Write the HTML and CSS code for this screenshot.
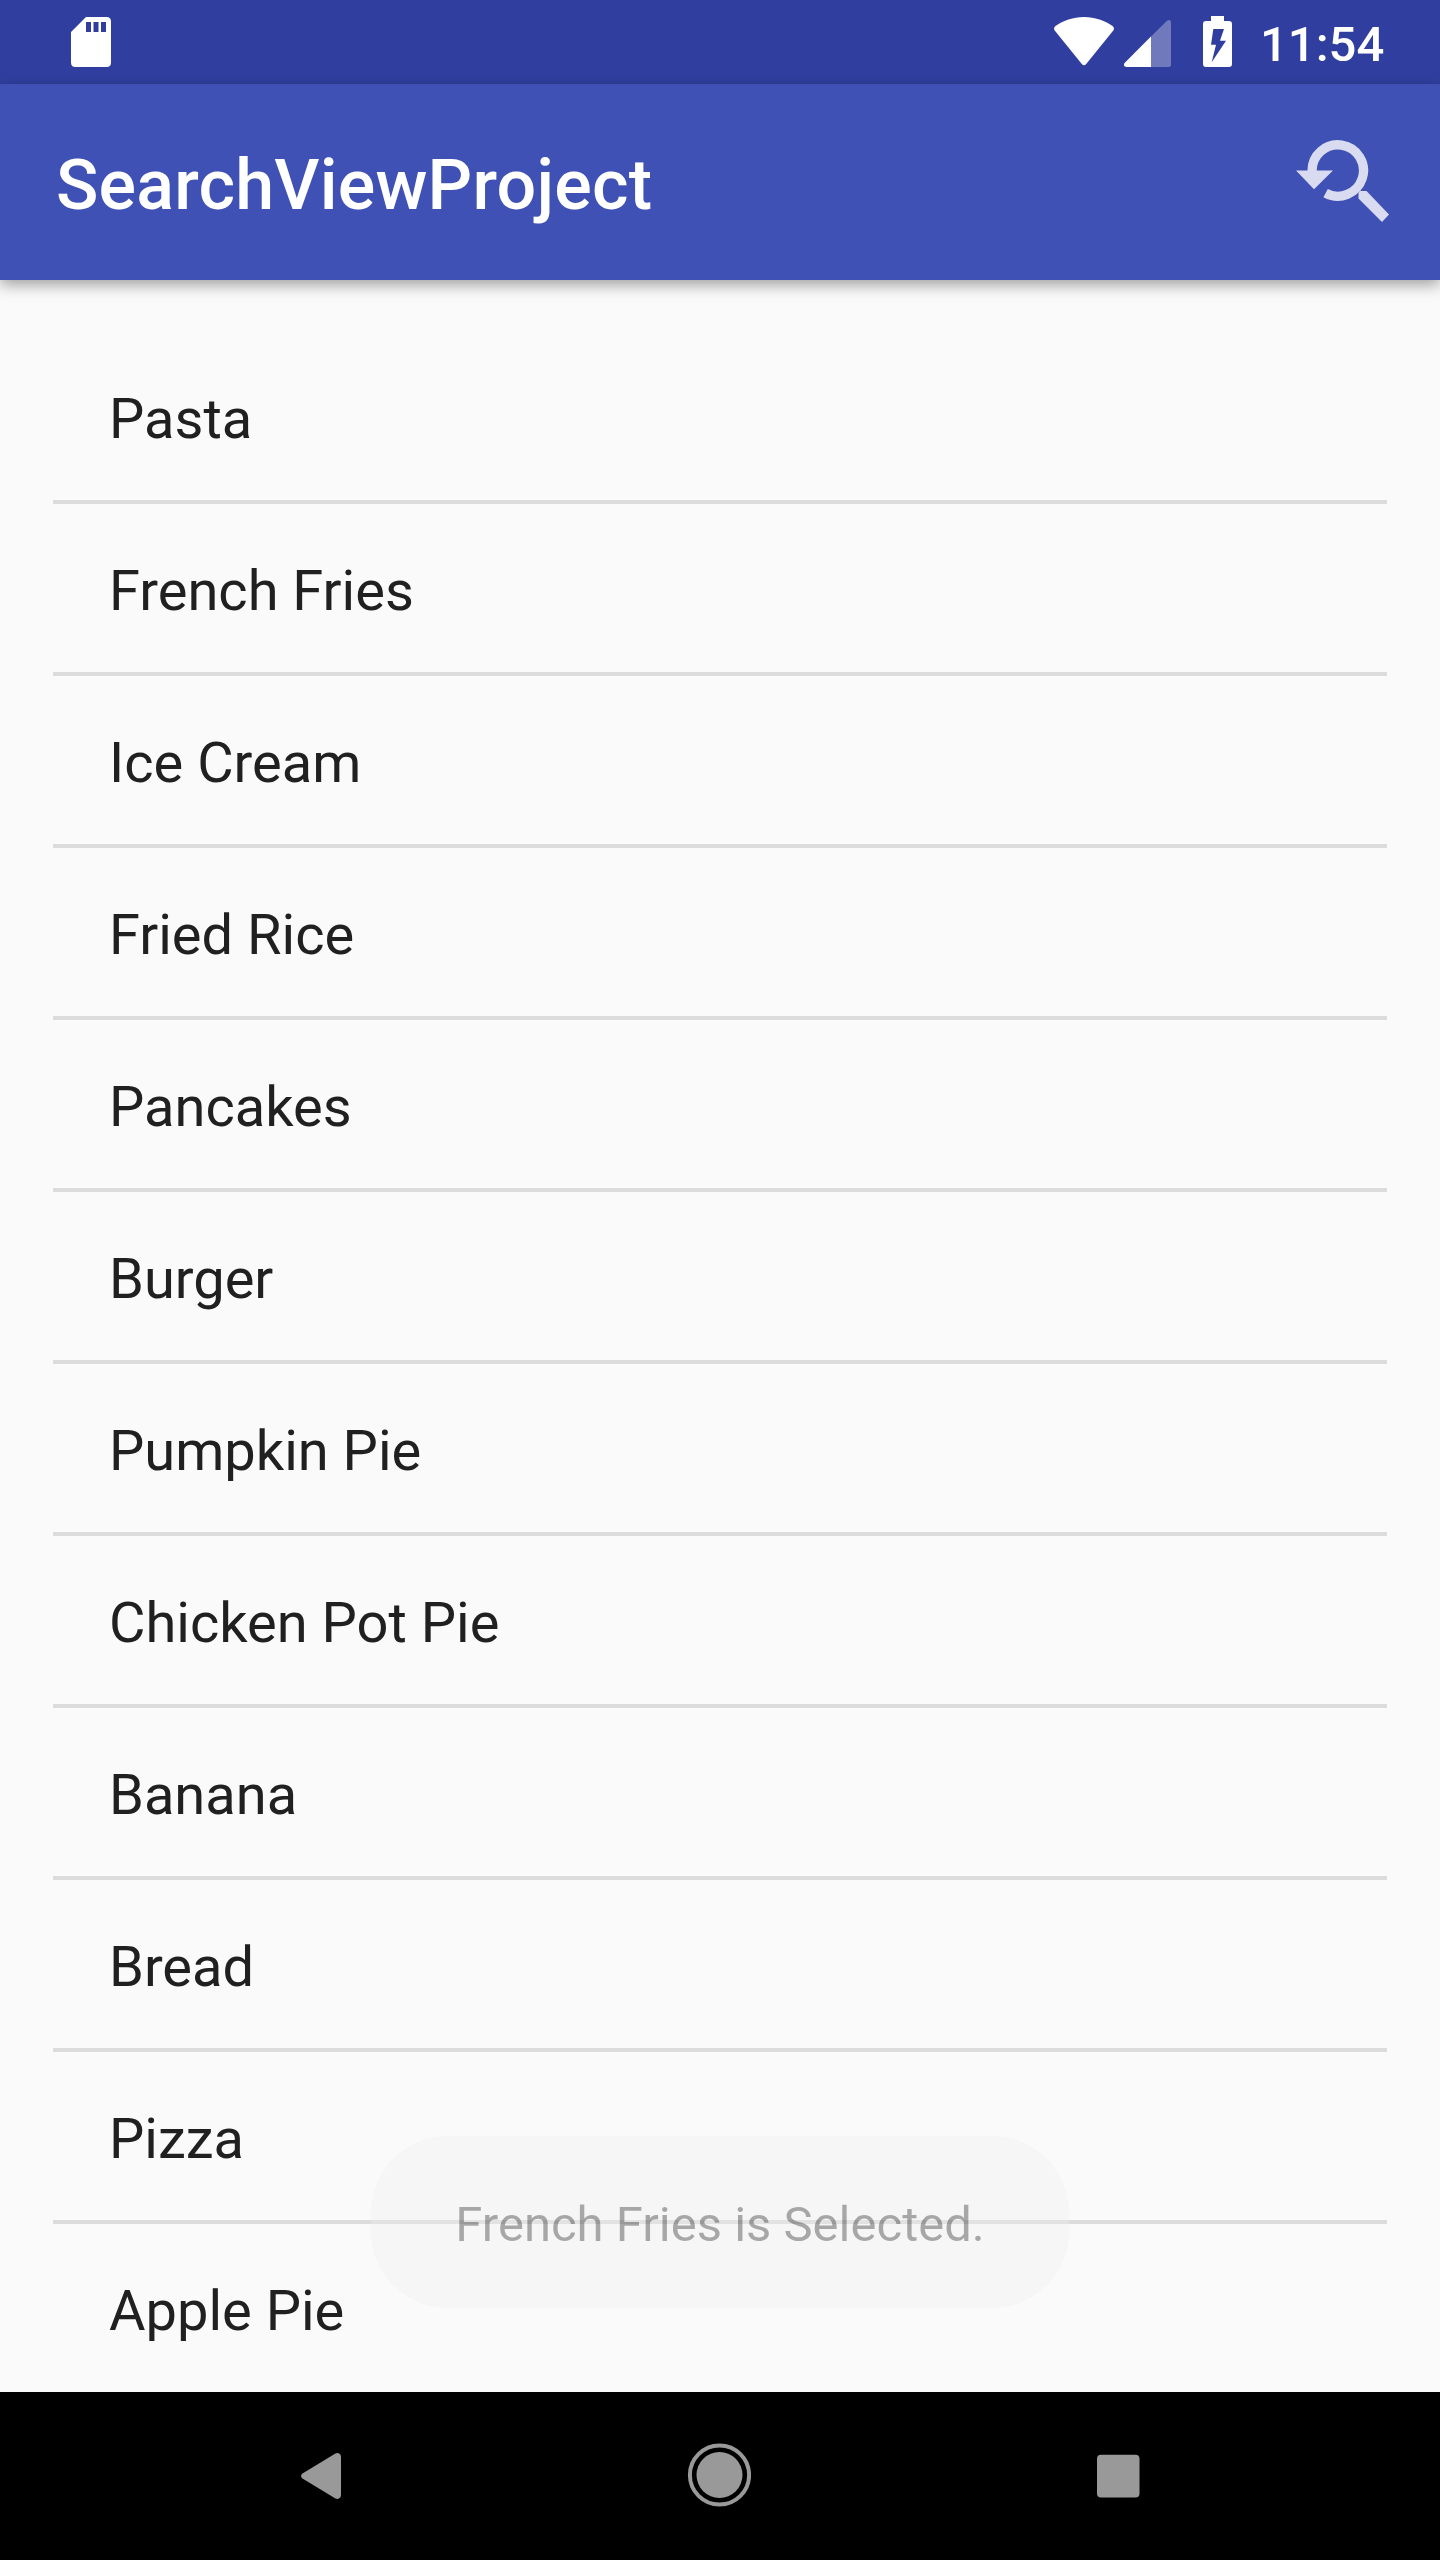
FILE: index.html
```html
<!DOCTYPE html>
<html lang="en">
<head>
<meta charset="utf-8">
<title>SearchViewProject</title>
<link rel="stylesheet" href="styles.css">
</head>
<body>
<div class="screen">
  <header class="status-bar">
    <svg class="sd-icon" viewBox="0 0 40 50"><path fill="#fff" fill-rule="evenodd" d="M15 0H35.500Q40 0 40 4.500V45.500Q40 50 35.500 50H4.500Q0 50 0 45.500V15ZM15 5V15H20V5ZM22.500 5V15H27.500V5ZM30 5V15H35V5Z"/></svg>
    <div class="status-icons">
      <svg class="wifi-icon" viewBox="0 0 60 49"><path fill="#fff" d="M30 0C41 0 50.500 3.500 58.500 9Q61 11 59.300 13.500L32 47.200Q30 49.200 28 47.200L.7 13.500Q-1 11 1.500 9C9.500 3.500 19 0 30 0Z"/></svg>
      <svg class="signal-icon" viewBox="0 0 47 47"><path fill="#7079bb" d="M27 16.500 43 .8Q44.500-.4 46 .3Q47 1 47 2.500V44.500Q47 47 44.500 47H27Z"/><path fill="#fff" d="M27 16.500V47H2.500Q.5 47 0 45.300Q-.2 44 .8 42.800Z"/></svg>
      <svg class="battery-icon" viewBox="0 0 29 51"><path fill="#fff" fill-rule="evenodd" d="M8 0H21V5H26Q29 5 29 8V48Q29 51 26 51H3Q0 51 0 48V8Q0 5 3 5H8ZM10.300 13 8 28.700H13L8.700 46.200 23 24.700H17L21 13Z"/></svg>
    </div>
    <span class="clock">11:54</span>
  </header>
  <div class="app-bar">
    <h1 class="app-title">SearchViewProject</h1>
    <svg class="search-icon" viewBox="0 0 93 83"><path fill="none" stroke="#d9dcf0" stroke-width="9.300" d="M16.100 31A25.700 25.700 0 1 1 29.600 53.100"/><path fill="#d9dcf0" d="M0 30.500H37L18 49.200ZM64 51H70.500L93 74.600 86 82 62.500 58.500V53Z"/></svg>
  </div>
  <main class="content">
    <ul class="food-list">
      <li class="food">Pasta</li>
      <li class="food">French Fries</li>
      <li class="food">Ice Cream</li>
      <li class="food">Fried Rice</li>
      <li class="food">Pancakes</li>
      <li class="food">Burger</li>
      <li class="food">Pumpkin Pie</li>
      <li class="food">Chicken Pot Pie</li>
      <li class="food">Banana</li>
      <li class="food">Bread</li>
      <li class="food">Pizza</li>
      <li class="food">Apple Pie</li>
    </ul>
  </main>
  <nav class="nav-bar">
    <svg class="back-icon" viewBox="0 0 40 46"><path fill="#999" d="M1.500 20.500 34 .8Q37-.8 39 1.200Q40 2.200 40 4V42Q40 43.800 39 44.800Q37 46.800 34 45.200L1.500 25.500Q-1.500 23 1.500 20.500Z"/></svg>
    <svg class="home-icon" viewBox="0 0 64 64"><circle cx="32.500" cy="32" r="29.600" fill="none" stroke="#999" stroke-width="4"/><circle cx="32.500" cy="32" r="23" fill="#999"/></svg>
    <svg class="recents-icon" viewBox="0 0 43 44"><rect y=".7" width="42.500" height="42.700" rx="4" fill="#999"/></svg>
  </nav>
  <div class="toast">French Fries is Selected.</div>
</div>
</body>
</html>
```
FILE: styles.css
```css
* { box-sizing: border-box; }

body {
  margin: 0;
  font-family: Roboto, sans-serif;
}

svg { display: block; flex: none; }

.screen {
  position: relative;
  display: flex;
  flex-direction: column;
  width: 1440px;
  height: 2560px;
  overflow: hidden;
  background: #fafafa;
}

.status-bar {
  display: flex;
  align-items: flex-start;
  height: 84px;
  padding: 0 56px 0 71px;
  background: #303f9f;
  color: #fff;
}

.sd-icon { width: 40px; height: 50px; margin-top: 17px; }

.status-icons {
  display: flex;
  margin-left: auto;
}

.wifi-icon { width: 60px; height: 49px; margin-top: 17px; }
.signal-icon { width: 47px; height: 47px; margin: 20px 0 0 10px; }
.battery-icon { width: 29px; height: 51px; margin: 16px 0 0 32px; }

.clock {
  width: 124px;
  margin-left: 28px;
  padding-top: 3px;
  font-size: 49px;
  font-weight: 500;
  line-height: 84px;
  text-align: right;
}

.app-bar {
  position: relative;
  display: flex;
  align-items: flex-start;
  justify-content: space-between;
  height: 196px;
  padding: 0 51px 0 56px;
  background: #3f51b5;
  color: #fff;
  box-shadow: 0 5px 14px rgba(0, 0, 0, .36);
}

.app-title {
  margin: 0;
  padding-top: 3px;
  font-size: 70px;
  font-weight: 500;
  letter-spacing: .2px;
  line-height: 196px;
}

.search-icon { width: 93px; height: 83px; margin-top: 56px; }

.content {
  flex: 1;
  padding: 52px 53px 0;
}

.food-list {
  margin: 0;
  padding: 0;
  list-style: none;
}

.food {
  height: 172px;
  padding: 3px 56px 0;
  border-bottom: 4px solid #dcdcdc;
  color: #202020;
  font-size: 56px;
  line-height: 168px;
}

.food:last-child {
  height: 168px;
  border-bottom: 0;
}

.nav-bar {
  display: flex;
  align-items: flex-start;
  height: 168px;
  padding-left: 301px;
  background: #000;
}

.back-icon { width: 40px; height: 46px; margin-top: 61px; }
.home-icon { width: 64px; height: 64px; margin: 51px 0 0 346px; }
.recents-icon { width: 43px; height: 44px; margin: 62px 0 0 346px; }

.toast {
  position: absolute;
  top: 2136px;
  left: 371px;
  width: 698px;
  height: 172px;
  padding-top: 3px;
  border-radius: 77px;
  background: rgba(238, 238, 238, .34);
  color: rgba(0, 0, 0, .32);
  font-size: 49px;
  line-height: 172px;
  text-align: center;
}
```
